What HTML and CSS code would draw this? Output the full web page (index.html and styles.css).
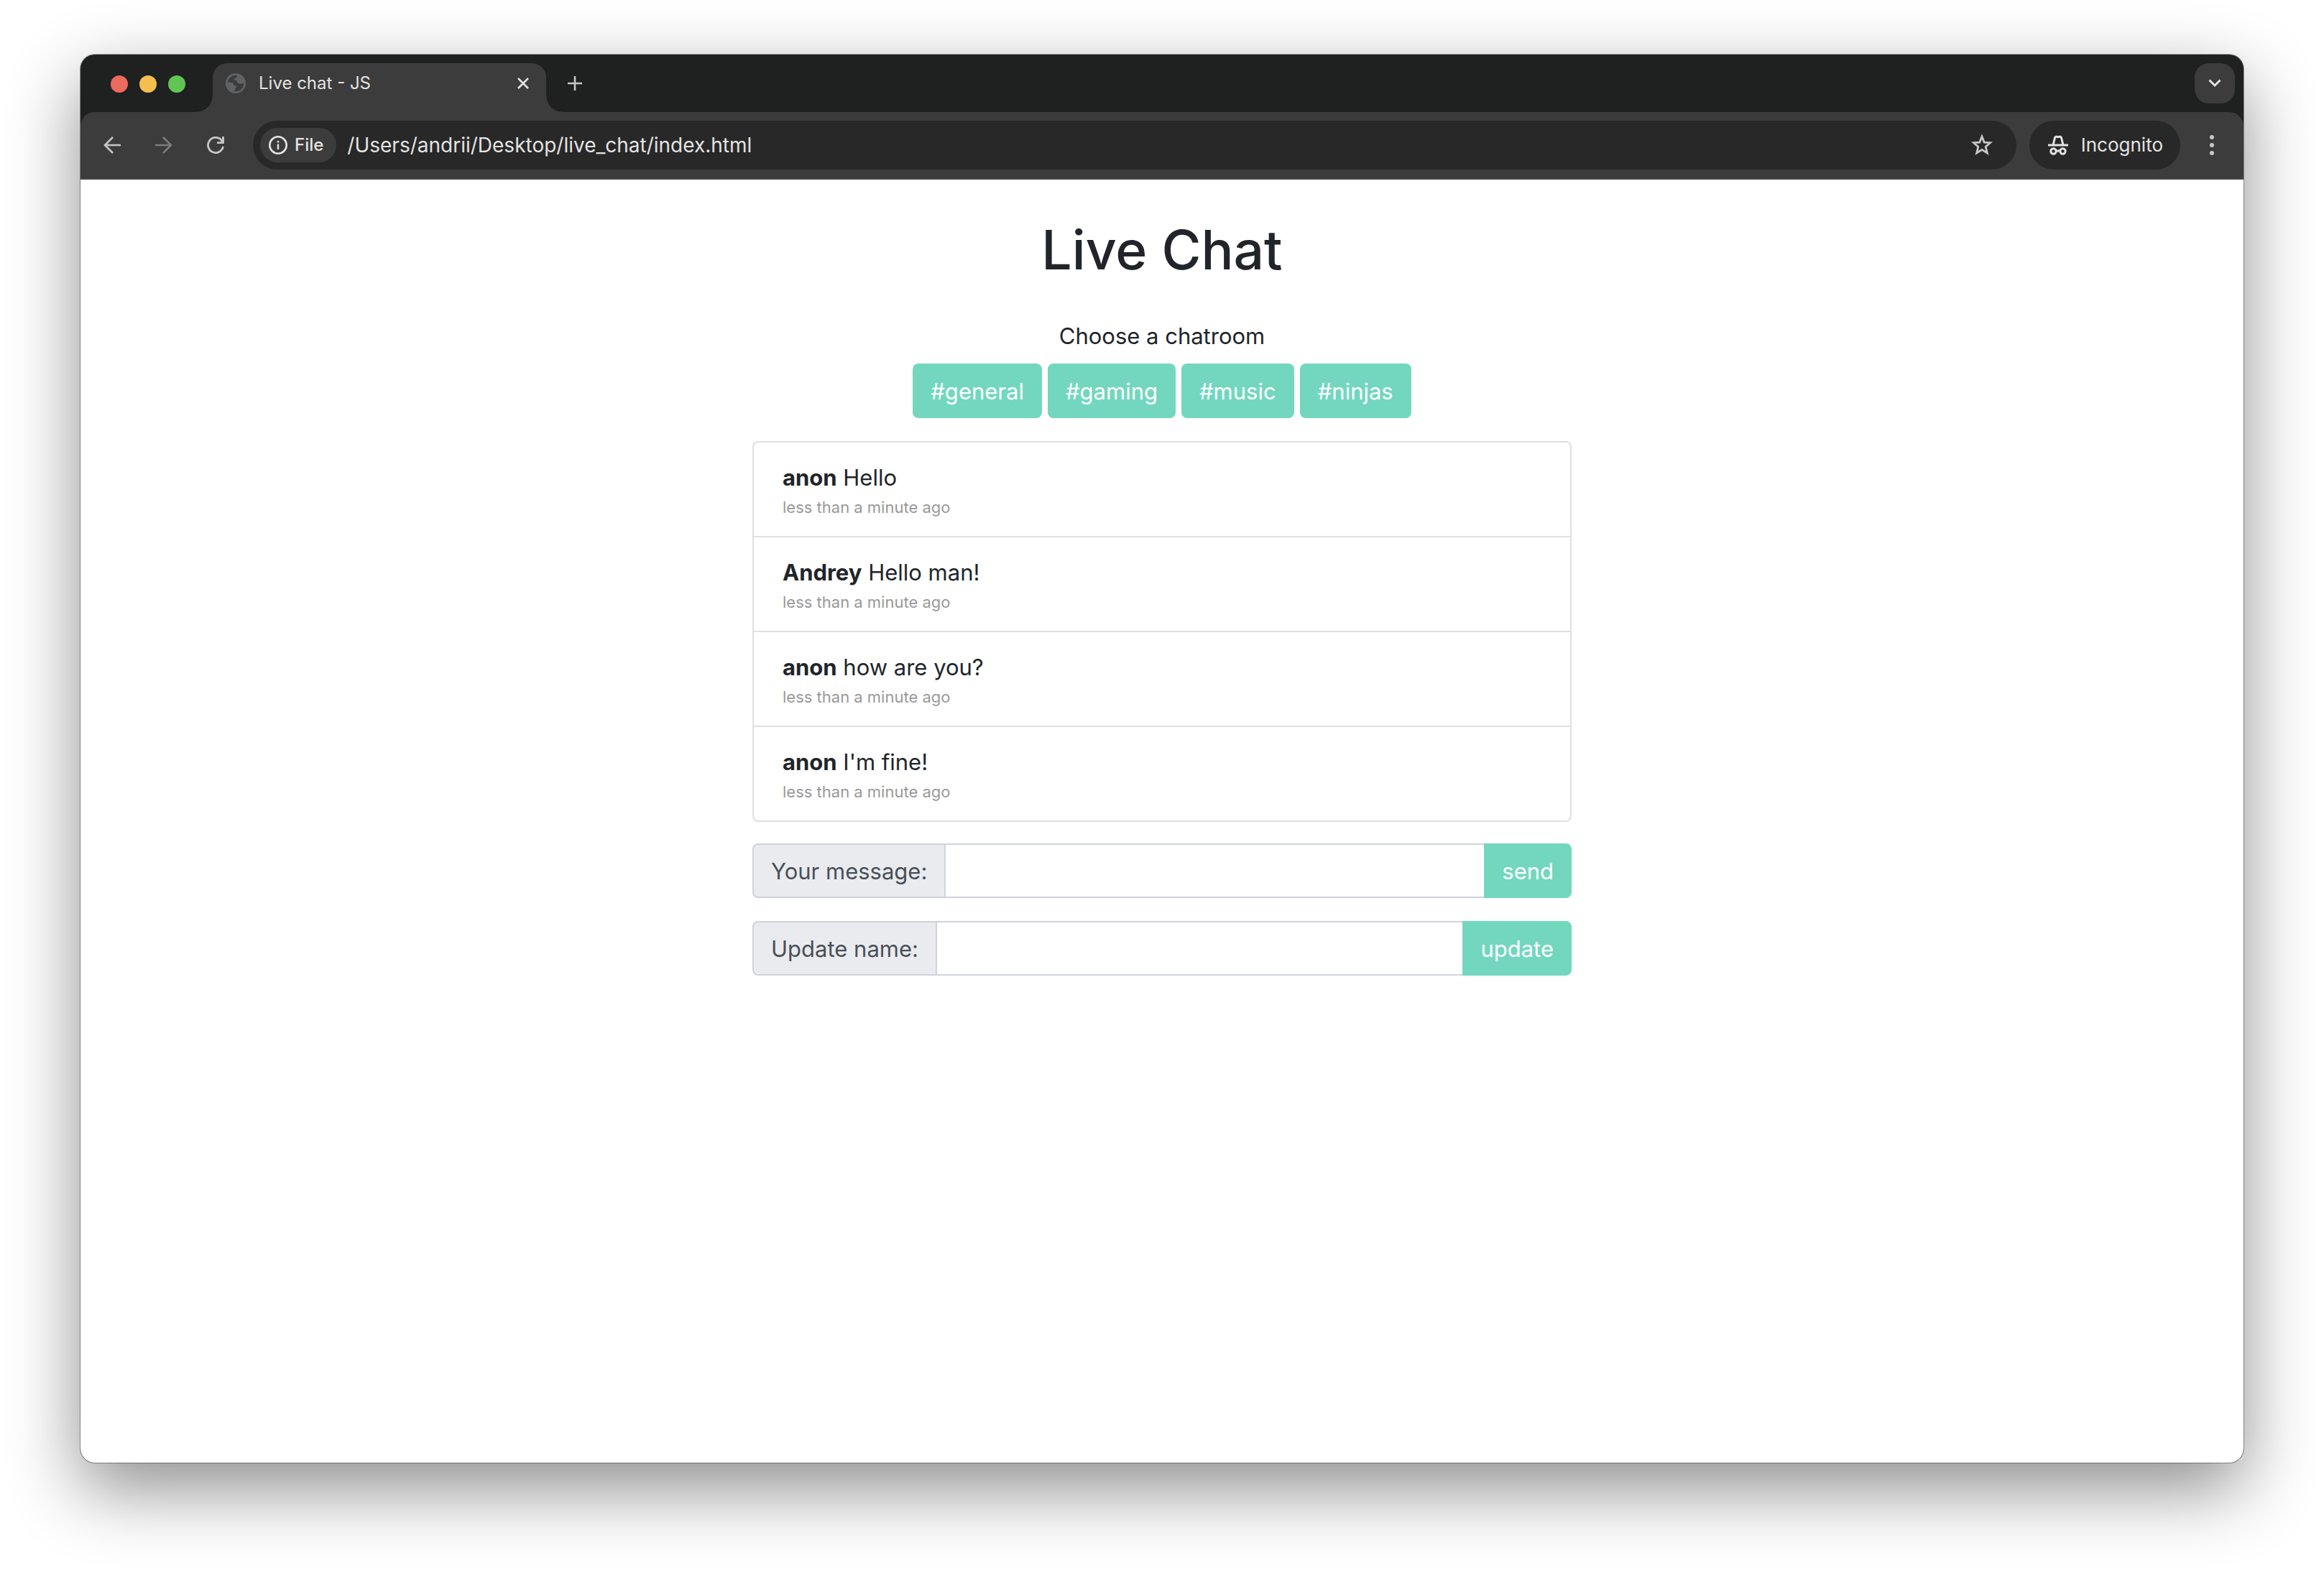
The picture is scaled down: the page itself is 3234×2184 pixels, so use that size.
FILE: index.html
```html
<!DOCTYPE html>
<html lang="en">
<head>
<meta charset="utf-8">
<title>Live chat - JS</title>
<link rel="stylesheet" href="styles.css">
</head>
<body>
<div class="window">
  <header class="tabstrip">
    <div class="lights">
      <button class="light light-close" aria-label="Close window"></button>
      <button class="light light-min" aria-label="Minimise window"></button>
      <button class="light light-max" aria-label="Zoom window"></button>
    </div>
    <div class="tab">
      <svg class="globe" viewBox="0 0 28 28" aria-hidden="true">
        <circle cx="14" cy="14" r="14" fill="#5f6368"/>
        <path d="M16 3Q16.500 5.500 14 6.500L11.500 8Q12 10 15 9.500Q15.500 13.500 19 14.500Q22 15 25.300 13.500A11.300 11.300 0 0 1 12 25Q11 22 14.500 20.500Q15.500 17 11.500 17Q11.500 13.500 8.500 13L2.800 12.500A11.300 11.300 0 0 1 16 3Z" fill="#3c3c3c"/>
        <path d="M3 13.500H8.500Q11 14 11 17Q15.500 17 15 20Q12 21 12.500 25A11.300 11.300 0 0 1 3 13.500Z" fill="#5f6368"/>
      </svg>
      <span class="tab-title">Live chat - JS</span>
      <button class="icon-btn" aria-label="Close tab">
        <svg width="18" height="18" viewBox="0 0 18 18"><path d="M2 2L16 16M16 2L2 16" stroke="#e3e3e3" stroke-width="2.600" fill="none"/></svg>
      </button>
    </div>
    <button class="icon-btn new-tab" aria-label="New tab">
      <svg width="20" height="20" viewBox="0 0 20 20"><path d="M10 0V20M0 10H20" stroke="#c7c7c7" stroke-width="2.600" fill="none"/></svg>
    </button>
    <button class="tab-search" aria-label="Search tabs">
      <svg width="18" height="12" viewBox="0 0 18 12"><path d="M1.500 1.500L9 9L16.500 1.500" stroke="#e3e3e3" stroke-width="3" fill="none"/></svg>
    </button>
  </header>
  <nav class="toolbar">
    <div class="nav-buttons">
      <button class="icon-btn" aria-label="Back">
        <svg width="24" height="24" viewBox="0 0 24 24"><path d="M24 12H2M13 1L2 12L13 23" stroke="#c7c7c7" stroke-width="2.600" fill="none"/></svg>
      </button>
      <button class="icon-btn" aria-label="Forward" disabled>
        <svg width="24" height="24" viewBox="0 0 24 24"><path d="M0 12H22M11 1L22 12L11 23" stroke="#7b7b7b" stroke-width="2.600" fill="none"/></svg>
      </button>
      <button class="icon-btn" aria-label="Reload">
        <svg width="24" height="24" viewBox="0 0 24 24"><path d="M22.500 14A10.600 10.600 0 1 1 20.500 5.500L22 8M22.500 0V8.600H14" stroke="#c7c7c7" stroke-width="2.800" fill="none"/></svg>
      </button>
    </div>
    <div class="omnibox">
      <button class="chip">
        <svg width="26" height="26" viewBox="0 0 26 26" aria-hidden="true"><circle cx="13" cy="13" r="11.700" fill="none" stroke="#e3e3e3" stroke-width="2.600"/><path d="M13 11.500V19M13 7V9.600" stroke="#e3e3e3" stroke-width="2.400"/></svg>
        File
      </button>
      <input class="url" type="text" aria-label="Address" value="/Users/andrii/Desktop/live_chat/index.html">
      <button class="icon-btn" aria-label="Bookmark this page">
        <svg width="32" height="32" viewBox="0 0 32 32"><path d="M16 4L19.200 12.100L27.600 12.700L21.200 18.300L23.300 27L16 22.400L8.700 27L10.800 18.300L4.400 12.700L12.800 12.100Z" stroke="#c7c7c7" stroke-width="2.800" fill="none"/></svg>
      </button>
    </div>
    <button class="incognito">
      <svg width="28" height="28" viewBox="0 0 28 28" aria-hidden="true" fill="none" stroke="#e3e3e3" stroke-width="3"><path d="M0 14H28M7 14L9.400 4Q10 1.800 12 2.300L14 2.800L16 2.300Q18 1.800 18.600 4L21 14"/><circle cx="7.500" cy="22.500" r="3.700"/><circle cx="20.500" cy="22.500" r="3.700"/><path d="M11 22H17"/></svg>
      Incognito
    </button>
    <button class="icon-btn menu" aria-label="Menu">
      <svg width="8" height="30" viewBox="0 0 8 30" fill="#c7c7c7"><circle cx="4" cy="4" r="3"/><circle cx="4" cy="15" r="3"/><circle cx="4" cy="26" r="3"/></svg>
    </button>
  </nav>
  <main class="page">
    <div class="container">
      <h1 class="title">Live Chat</h1>
      <div class="rooms">
        <p class="rooms-label">Choose a chatroom</p>
        <div class="rooms-list">
          <button class="btn" id="general">#general</button>
          <button class="btn" id="gaming">#gaming</button>
          <button class="btn" id="music">#music</button>
          <button class="btn" id="ninjas">#ninjas</button>
        </div>
      </div>
      <ul class="messages">
        <li class="message"><div class="text"><strong>anon</strong> Hello</div><div class="time">less than a minute ago</div></li>
        <li class="message"><div class="text"><strong>Andrey</strong> Hello man!</div><div class="time">less than a minute ago</div></li>
        <li class="message"><div class="text"><strong>anon</strong> how are you?</div><div class="time">less than a minute ago</div></li>
        <li class="message"><div class="text"><strong>anon</strong> I'm fine!</div><div class="time">less than a minute ago</div></li>
      </ul>
      <form class="group">
        <label class="group-label" for="message">Your message:</label>
        <input class="group-input" id="message" type="text">
        <button class="btn btn-end" type="button">send</button>
      </form>
      <form class="group">
        <label class="group-label" for="name">Update name:</label>
        <input class="group-input" id="name" type="text">
        <button class="btn btn-end" type="button">update</button>
      </form>
    </div>
  </main>
</div>
</body>
</html>
```
FILE: styles.css
```css
* {
  box-sizing: border-box;
}

body {
  margin: 0;
  min-height: 100vh;
  padding: 76px 112px 148px;
  display: flex;
  background: #fff;
  color: #212529;
  font-family: Inter, "Liberation Sans", sans-serif;
  font-size: 31px;
  line-height: 48px;
}

button,
input {
  margin: 0;
  padding: 0;
  border: 0;
  background: none;
  color: inherit;
  font: inherit;
}

svg {
  display: block;
  flex: none;
}

.window {
  flex: 1;
  display: flex;
  flex-direction: column;
  overflow: hidden;
  border-radius: 20px;
  background: #1f2020;
  box-shadow: 0 0 0 1px rgba(0, 0, 0, 0.35), 0 36px 100px rgba(0, 0, 0, 0.45);
}

/* Tab strip */
.tabstrip {
  display: flex;
  height: 80px;
  padding: 12px 12px 0 42px;
  color: #e3e3e3;
}

.lights {
  display: flex;
  gap: 16px;
  padding-top: 17px;
  margin-right: 38px;
}

.light {
  width: 24px;
  height: 24px;
  border-radius: 50%;
}

.light-close {
  background: #ed6a5e;
}

.light-min {
  background: #f5bf4f;
}

.light-max {
  background: #61c554;
}

.tab {
  position: relative;
  display: flex;
  align-items: center;
  width: 464px;
  padding: 0 23px 12px 18px;
  border-radius: 20px 20px 0 0;
  background: #3c3c3c;
  font-size: 24px;
  line-height: 32px;
}

.tab::before,
.tab::after {
  content: "";
  position: absolute;
  bottom: 0;
  width: 22px;
  height: 22px;
}

.tab::before {
  right: 100%;
  background: radial-gradient(circle at 0 0, transparent 21px, #3c3c3c 22px);
}

.tab::after {
  left: 100%;
  background: radial-gradient(circle at 100% 0, transparent 21px, #3c3c3c 22px);
}

.globe {
  width: 28px;
  height: 28px;
  margin-right: 18px;
}

.tab-title {
  flex: 1;
}

.icon-btn {
  display: flex;
  align-items: center;
  justify-content: center;
}

.new-tab {
  height: 56px;
  margin-left: 30px;
}

.tab-search {
  display: flex;
  align-items: center;
  justify-content: center;
  width: 56px;
  height: 56px;
  margin-left: auto;
  border-radius: 20px;
  background: #3c3c3c;
}

/* Toolbar */
.toolbar {
  display: flex;
  align-items: center;
  height: 94px;
  padding: 0 40px 0 32px;
  border-bottom: 2px solid #474747;
  border-radius: 20px 20px 0 0;
  background: #3c3c3c;
  color: #e3e3e3;
}

.nav-buttons {
  display: flex;
  gap: 48px;
  margin-right: 40px;
}

.omnibox {
  flex: 1;
  display: flex;
  align-items: center;
  height: 68px;
  padding: 0 32px 0 10px;
  border-radius: 34px;
  background: #282828;
}

.chip {
  display: flex;
  align-items: center;
  gap: 10px;
  height: 48px;
  padding: 0 18px 0 12px;
  border-radius: 24px;
  background: #3c3c3c;
  font-size: 24px;
  font-weight: 500;
}

.url {
  flex: 1;
  min-width: 0;
  height: 48px;
  margin-left: 15px;
  font-size: 28px;
}

.incognito {
  display: flex;
  align-items: center;
  gap: 18px;
  height: 68px;
  margin-left: 18px;
  padding: 0 24px 0 26px;
  border-radius: 34px;
  background: #282828;
  font-size: 26px;
}

.menu {
  margin-left: 40px;
}

/* Page */
.page {
  flex: 1;
  padding: 50px 0;
  background: #fff;
}

.container {
  max-width: 1140px;
  margin: 0 auto;
}

.title {
  margin: 0 0 48px;
  font-size: 75px;
  font-weight: 500;
  line-height: 96px;
  text-align: center;
}

.rooms {
  margin-bottom: 32px;
  text-align: center;
}

.rooms-label {
  margin: 0 0 14px;
}

.rooms-list {
  display: flex;
  justify-content: center;
  gap: 8px;
}

.btn {
  height: 76px;
  padding: 2px 25px 0;
  border-radius: 8px;
  background: #73d7bf;
  color: #fff;
}

.messages {
  margin: 0 0 30px;
  padding: 0;
  list-style: none;
  border: 2px solid #dfdfdf;
  border-radius: 8px;
}

.message {
  padding: 25px 40px 23px;
}

.message + .message {
  border-top: 2px solid #dfdfdf;
}

.text strong {
  font-weight: 700;
}

.time {
  color: #999;
  font-size: 22px;
  line-height: 34px;
}

.group {
  display: flex;
  height: 76px;
  margin-bottom: 32px;
}

.group-label {
  padding: 13px 24px 11px;
  border: 2px solid #ced4da;
  border-radius: 8px 0 0 8px;
  background: #e9ebef;
  color: #495057;
}

.group-input {
  flex: 1;
  min-width: 0;
  padding: 0 24px;
  border: solid #ced4da;
  border-width: 2px 0;
}

.btn-end {
  border-radius: 0 8px 8px 0;
}
```
